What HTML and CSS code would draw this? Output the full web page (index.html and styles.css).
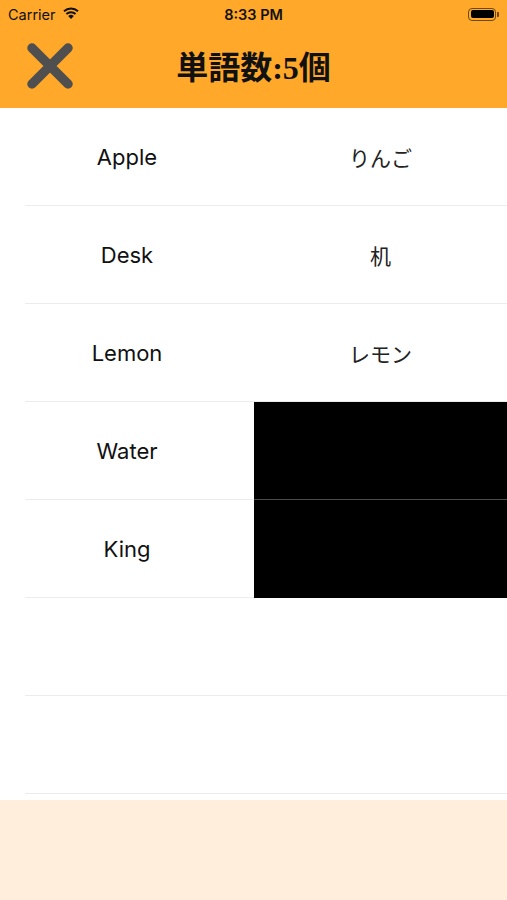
FILE: index.html
```html
<!DOCTYPE html>
<html lang="ja">
<head>
<meta charset="utf-8">
<link rel="stylesheet" href="styles.css">
</head>
<body>
<div class="app">
  <header class="top">
    <div class="status">
      <div class="status-left">
        <span class="carrier">Carrier</span>
        <svg class="wifi" width="16" height="12" viewBox="0 0 16 12">
          <path d="M8 12 L5.2 8.9 A4.2 4.2 0 0 1 10.8 8.9 Z" fill="#111"/>
          <path d="M3.4 7 A6.8 6.8 0 0 1 12.6 7" fill="none" stroke="#111" stroke-width="1.9"/>
          <path d="M1 4.3 A10.2 10.2 0 0 1 15 4.3" fill="none" stroke="#111" stroke-width="1.9"/>
        </svg>
      </div>
      <div class="time">8:33 PM</div>
      <div class="status-right">
        <div class="battery"><div class="battery-fill"></div></div>
        <div class="battery-nub"></div>
      </div>
    </div>
    <nav class="nav">
      <div class="nav-left">
        <svg class="close" width="48" height="48" viewBox="0 0 48 48">
          <path d="M6 6 L42 42 M42 6 L6 42" stroke="#4f4f4f" stroke-width="9.5" stroke-linecap="round"/>
        </svg>
      </div>
      <h1 class="title">単語数:5個</h1>
      <div class="nav-right"></div>
    </nav>
  </header>
  <main class="list">
    <div class="row"><div class="cell en">Apple</div><div class="cell ja">りんご</div></div>
    <div class="row"><div class="cell en">Desk</div><div class="cell ja">机</div></div>
    <div class="row"><div class="cell en">Lemon</div><div class="cell ja">レモン</div></div>
    <div class="row"><div class="cell en">Water</div><div class="cell ja hidden"></div></div>
    <div class="row"><div class="cell en">King</div><div class="cell ja hidden last"></div></div>
    <div class="row empty"></div>
    <div class="row empty"></div>
  </main>
  <footer class="bottom"></footer>
</div>
</body>
</html>
```
FILE: styles.css
```css
* { box-sizing: border-box; }
html, body { margin: 0; padding: 0; }
body {
  width: 507px;
  height: 900px;
  overflow: hidden;
  background: #fff;
  font-family: Inter, "Liberation Sans", "Noto Sans CJK JP", sans-serif;
}
.app {
  height: 900px;
  display: flex;
  flex-direction: column;
}
.top {
  background: #ffa82a;
  height: 108px;
}
.status {
  height: 28px;
  display: grid;
  grid-template-columns: 1fr auto 1fr;
  align-items: center;
  padding: 0 8px;
  color: #111;
}
.status-left {
  display: flex;
  align-items: center;
  gap: 7px;
}
.carrier {
  font-size: 14.5px;
  font-family: Inter, "Liberation Sans", sans-serif;
}
.wifi { margin-top: -2px; }
.time {
  font-size: 14.5px;
  font-weight: 600;
}
.status-right {
  display: flex;
  justify-content: flex-end;
  align-items: center;
}
.battery {
  width: 28px;
  height: 13px;
  border: 1px solid #6b4a10;
  border-radius: 4px;
  padding: 1.5px;
  margin-right: 1px;
}
.battery-fill {
  width: 100%;
  height: 100%;
  background: #000;
  border-radius: 2px;
}
.battery-nub {
  width: 2px;
  height: 5px;
  background: #6b4a10;
  border-radius: 0 1px 1px 0;
}
.nav {
  height: 80px;
  padding-bottom: 6px;
  display: grid;
  grid-template-columns: 1fr auto 1fr;
  align-items: center;
}
.nav-left {
  padding-left: 26px;
  display: flex;
  align-items: center;
  margin-top: 2px;
}
.close { display: block; }
.title {
  margin: 0;
  font-family: "Liberation Serif", "Noto Sans CJK JP", serif;
  font-size: 32px;
  font-weight: 700;
  color: #111;
  letter-spacing: 0;
}
.list {
  flex: 1;
  display: flex;
  flex-direction: column;
}
.row {
  height: 98px;
  margin-left: 25px;
  display: grid;
  grid-template-columns: 229px 1fr;
  border-bottom: 1px solid #ececec;
}
.row.empty { display: block; }
.cell {
  display: flex;
  align-items: center;
  justify-content: center;
  color: #111;
}
.en {
  padding-right: 25px;
  font-size: 22px;
}
.ja {
  font-family: "Noto Sans CJK JP", sans-serif;
  font-size: 21px;
  font-weight: 400;
  color: #222;
}
.hidden {
  background: #000;
  border-bottom: 1px solid #4a4a4a;
  margin-bottom: -1px;
}
.hidden.last { border-bottom-color: #000; }
.bottom {
  height: 100px;
  background: #feeedb;
}
```
